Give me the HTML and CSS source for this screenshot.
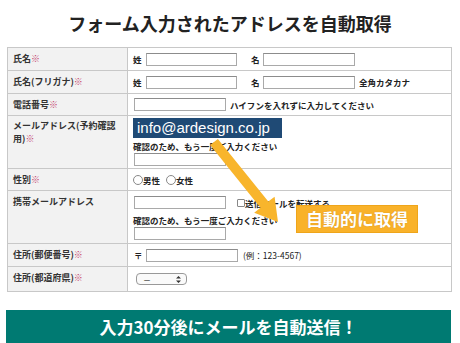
FILE: index.html
```html
<!DOCTYPE html>
<html lang="ja">
<head>
    <meta charset="UTF-8">
    <title>フォーム入力されたアドレスを自動取得</title>
    <link rel="stylesheet" href="styles.css">
</head>
<body>
<div class="page">
    <h1 class="title">フォーム入力されたアドレスを自動取得</h1>

    <div class="form-table">
        <div class="form-row h23">
            <div class="form-label">氏名<span class="req">※</span></div>
            <div class="form-field">
                <span class="sub">姓</span><input type="text" class="input-field w91">
                <span class="sub gap-l">名</span><input type="text" class="input-field w92">
            </div>
        </div>
        <div class="form-row h23">
            <div class="form-label">氏名(フリガナ)<span class="req">※</span></div>
            <div class="form-field">
                <span class="sub">姓</span><input type="text" class="input-field w91">
                <span class="sub gap-l">名</span><input type="text" class="input-field w92">
                <span class="note">全角カタカナ</span>
            </div>
        </div>
        <div class="form-row h22">
            <div class="form-label">電話番号<span class="req">※</span></div>
            <div class="form-field">
                <input type="text" class="input-field w92 first">
                <span class="note">ハイフンを入れずに入力してください</span>
            </div>
        </div>
        <div class="form-row h53">
            <div class="form-label tight">メールアドレス(予約確認<br>用)<span class="req">※</span></div>
            <div class="form-field stack mail">
                <div class="mail-sample">info@ardesign.co.jp</div>
                <div class="note plain">確認のため、もう一度ご入力ください</div>
                <input type="text" class="input-field w92 first">
            </div>
        </div>
        <div class="form-row h22">
            <div class="form-label">性別<span class="req">※</span></div>
            <div class="form-field">
                <label class="choice"><span class="radio"></span>男性</label>
                <label class="choice"><span class="radio"></span>女性</label>
            </div>
        </div>
        <div class="form-row h53">
            <div class="form-label">携帯メールアドレス</div>
            <div class="form-field stack mobile">
                <div class="line">
                    <input type="text" class="input-field w92 first">
                    <label class="choice check-label"><span class="checkbox"></span>送信メールを転送する</label>
                </div>
                <div class="note plain">確認のため、もう一度ご入力ください</div>
                <input type="text" class="input-field w92 first">
            </div>
        </div>
        <div class="form-row h23">
            <div class="form-label">住所(郵便番号)<span class="req">※</span></div>
            <div class="form-field">
                <span class="sub zip">〒</span><input type="text" class="input-field w92">
                <span class="note example">(例：123-4567)</span>
            </div>
        </div>
        <div class="form-row h24 last">
            <div class="form-label">住所(都道府県)<span class="req">※</span></div>
            <div class="form-field">
                <div class="select-box">
                    <span>－</span>
                    <svg width="5" height="7" viewBox="0 0 5 7"><path d="M2.5 0 L5 2.5 H0 Z M2.5 7 L5 4.5 H0 Z" fill="#333"/></svg>
                </div>
            </div>
        </div>
    </div>

    <div class="banner">入力30分後にメールを自動送信！</div>

    <!-- overlay: arrow + label -->
    <svg class="arrow" width="460" height="343" viewBox="0 0 460 343">
        <polygon points="217.9,138.9 210.1,145.1 260.5,207.8 254.2,212.7 278,222 274.6,196.7 268.3,201.6" fill="#f8b52c"/>
    </svg>
    <div class="auto-label">自動的に取得</div>
</div>
</body>
</html>
```

FILE: styles.css
```css
body {
    margin: 0;
    background: #fff;
    font-family: "Noto Sans CJK JP", "Noto Sans", sans-serif;
    color: #333;
}
.page {
    position: relative;
    width: 460px;
    height: 343px;
    overflow: hidden;
}
.title {
    margin: 0;
    height: 47px;
    line-height: 46px;
    text-align: center;
    font-size: 18px;
    font-weight: bold;
    color: #222;
}
.form-table {
    margin-left: 7px;
    width: 445px;
    box-sizing: border-box;
    border: 1px solid #c8c8c8;
}
.form-row {
    display: flex;
    box-sizing: border-box;
    border-bottom: 1px solid #c8c8c8;
}
.form-row.last {
    border-bottom: none;
}
.h22 { height: 22px; }
.h23 { height: 23px; }
.h24 { height: 24px; }
.h53 { height: 53px; }
.form-label {
    width: 120px;
    flex-shrink: 0;
    box-sizing: border-box;
    padding: 5px 6px 0 5px;
    background: #f2f2f2;
    border-right: 1px solid #c8c8c8;
    font-size: 9px;
    line-height: 11px;
    font-weight: bold;
    color: #333;
}
.form-label.tight {
    padding-top: 3px;
    line-height: 13px;
}
.req {
    color: #c4426e;
}
.form-field {
    flex: 1;
    display: flex;
    align-items: center;
    padding-left: 5px;
    font-size: 8.5px;
    font-weight: bold;
    color: #222;
}
.form-field.stack {
    flex-direction: column;
    align-items: flex-start;
}
.form-field.mail {
    padding-top: 2px;
}
.form-field.mail .note.plain {
    margin: 3px 0 2px;
}
.form-field.mobile {
    padding-top: 5px;
}
.form-field.mobile .note.plain {
    margin: 6px 0 2px;
}
.input-field {
    box-sizing: border-box;
    height: 13px;
    margin: 0;
    padding: 0;
    border: 1px solid #a9a9a9;
    border-top-color: #8c8c8c;
    background: #fff;
}
.w91 { width: 91px; }
.w92 { width: 92px; }
.input-field.first {
    margin-left: 1px;
}
.sub {
    width: 9px;
    margin-right: 4px;
}
.sub.gap-l {
    margin-left: 14px;
    margin-right: 3px;
}
.sub.zip {
    margin-left: 1px;
    margin-right: 3px;
}
.note {
    margin-left: 4px;
}
.note.example {
    margin-left: 5px;
    font-weight: normal;
}
.note.plain {
    line-height: 10px;
}
.mail-sample {
    box-sizing: border-box;
    width: 149px;
    height: 20px;
    padding-left: 4px;
    background: #1f4a75;
    color: #fff;
    font-family: "Liberation Sans", Arial, sans-serif;
    font-size: 15px;
    font-weight: normal;
    line-height: 20px;
}
.line {
    display: flex;
    align-items: center;
}
.choice {
    display: flex;
    align-items: center;
    margin-right: 6px;
}
.radio {
    width: 8px;
    height: 8px;
    border: 1px solid #888;
    border-radius: 50%;
    background: #fff;
}
.checkbox {
    width: 6px;
    height: 6px;
    border: 1px solid #888;
    border-radius: 1px;
    background: #fff;
}
.check-label {
    margin-left: 11px;
}
.select-box {
    display: flex;
    align-items: center;
    justify-content: space-between;
    box-sizing: border-box;
    width: 51px;
    height: 12px;
    margin-left: 3px;
    padding: 0 5px 0 6px;
    border: 1px solid #999;
    border-radius: 4px;
    background: #fafafa;
    font-size: 8px;
    font-weight: normal;
}
.banner {
    margin: 18px 0 0 6px;
    width: 445px;
    height: 33px;
    background: #007a72;
    color: #fff;
    text-align: center;
    font-size: 17px;
    font-weight: bold;
    line-height: 33px;
}
.arrow {
    position: absolute;
    left: 0;
    top: 0;
    pointer-events: none;
}
.auto-label {
    position: absolute;
    left: 296px;
    top: 205px;
    box-sizing: border-box;
    width: 122px;
    height: 28px;
    border: 1px solid #efa51a;
    background: #f9b22a;
    color: #fff;
    text-align: center;
    font-size: 17px;
    font-weight: bold;
    line-height: 26px;
    text-shadow: 0 0 1px rgba(150, 90, 0, 0.5);
}
```
